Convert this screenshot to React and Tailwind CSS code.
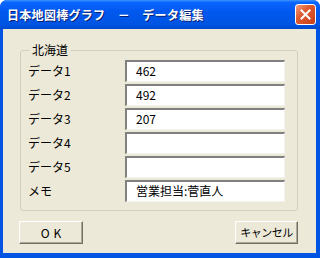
export default function App() {
  const rows = [
    { label: "データ1", value: "462" },
    { label: "データ2", value: "492" },
    { label: "データ3", value: "207" },
    { label: "データ4", value: "" },
    { label: "データ5", value: "" },
    { label: "メモ", value: "営業担当:菅直人" },
  ];
  const font = { fontFamily: '"Noto Sans CJK JP", "Noto Sans", sans-serif' };
  return (
    <div
      className="w-[320px] h-[258px] flex flex-col bg-[#0054e3] overflow-hidden rounded-t-[7px]"
      style={font}
    >
      <div className="h-[29px] shrink-0 flex items-center justify-between pl-[7px] pr-[4px] bg-[linear-gradient(#3d95ff_0%,#0a66ff_8%,#0058ee_40%,#0054e3_85%,#0048cc_100%)]">
        <span className="text-white font-bold text-[12px] leading-none tracking-[0.3px] [text-shadow:1px_1px_0_#0a1f70]">
          日本地図棒グラフ　－　データ編集
        </span>
        <div className="w-[21px] h-[21px] rounded-[3px] border border-white bg-[linear-gradient(135deg,#f0a080_0%,#e05a30_40%,#c8401a_100%)] flex items-center justify-center">
          <svg width="11" height="11" viewBox="0 0 11 11">
            <path d="M1.5 1.5 L9.5 9.5 M9.5 1.5 L1.5 9.5" stroke="white" strokeWidth="2" strokeLinecap="square" />
          </svg>
        </div>
      </div>
      <div className="flex-1 ml-[3px] mr-[4px] mb-[5px] bg-[#ece9d8] flex flex-col pt-[13px] text-[12px] text-black">
        <fieldset className="ml-[17px] mr-[18px] border border-[#d0d0bf] rounded-[3px] pl-[7px] pr-[11px] pt-[2px] pb-[8px]">
          <legend className="ml-[1px] px-[3px] leading-[16px] text-[12px]">北海道</legend>
          <div className="flex flex-col gap-[2px]">
            {rows.map((r) => (
              <div key={r.label} className="flex items-center h-[22px]">
                <span className="w-[97px] leading-none">{r.label}</span>
                <div className="w-[160px] h-[22px] bg-white border-t-2 border-l-2 border-t-[#808080] border-l-[#808080] border-b border-r border-b-[#f4f3ee] border-r-[#f4f3ee] flex items-center pl-[9px] pb-[2px] leading-none">
                  {r.value}
                </div>
              </div>
            ))}
          </div>
        </fieldset>
        <div className="mt-[10px] ml-[16px] mr-[18px] flex justify-between">
          <button className="w-[64px] h-[23px] bg-[#ece9d8] border border-t-white border-l-white border-b-[#716f64] border-r-[#716f64] shadow-[inset_-1px_-1px_0_#aca899] flex items-center justify-center text-[12px] leading-none tracking-[4px] pl-[4px]">
            OK
          </button>
          <button className="w-[63px] h-[23px] bg-[#ece9d8] border border-t-white border-l-white border-b-[#716f64] border-r-[#716f64] shadow-[inset_-1px_-1px_0_#aca899] flex items-center justify-center text-[11px] leading-none tracking-[-0.5px]">
            キャンセル
          </button>
        </div>
      </div>
    </div>
  );
}
